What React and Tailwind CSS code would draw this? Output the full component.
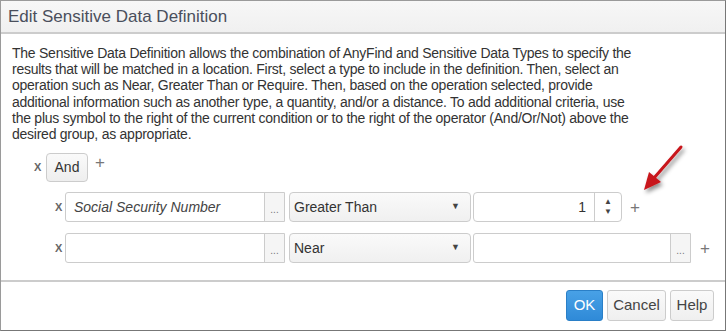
import React from "react";

const font = { fontFamily: '"Liberation Sans", Arial, sans-serif' };

const intro = [
  "The Sensitive Data Definition allows the combination of AnyFind and Sensitive Data Types to specify the",
  "results that will be matched in a location. First, select a type to include in the definition. Then, select an",
  "operation such as Near, Greater Than or Require. Then, based on the operation selected, provide",
  "additional information such as another type, a quantity, and/or a distance. To add additional criteria, use",
  "the plus symbol to the right of the current condition or to the right of the operator (And/Or/Not) above the",
  "desired group, as appropriate.",
];

function Remove({ className = "" }) {
  return (
    <span className={`text-[11px] font-bold text-[#666] w-[8px] ${className}`}>X</span>
  );
}

function Plus({ className = "" }) {
  return <span className={`text-[17px] text-[#777] leading-none ${className}`}>+</span>;
}

function Ellipsis() {
  return (
    <div className="w-[20px] h-full flex items-end justify-center pb-[6px] bg-[#f5f5f5] border-l border-[#ccc] text-[10px] text-[#777] leading-none">
      ...
    </div>
  );
}

function Select({ value }) {
  return (
    <div className="w-[182px] h-[30px] flex items-center justify-between pl-[4px] pr-[10px] rounded-[4px] border border-[#ccc] bg-gradient-to-b from-[#fafafa] to-[#f0f0f0] text-[14px] text-[#333]">
      <span>{value}</span>
      <span className="text-[9px] text-[#444]">▼</span>
    </div>
  );
}

export default function App() {
  return (
    <div className="w-[727px] h-[332px] bg-white" style={font}>
      <div className="relative w-[726px] h-[331px] border border-[#9a9a9a] border-r-[#777] border-b-[#777] flex flex-col">
        {/* header */}
        <div className="h-[33px] shrink-0 flex items-center pl-[7px] bg-gradient-to-b from-[#f7f7f7] to-[#f0f0f0] border-b-2 border-[#ccc]">
          <h2 className="text-[17px] text-[#4a4f5c]">Edit Sensitive Data Definition</h2>
        </div>

        {/* body */}
        <div className="flex-1 pl-[11px] pr-[10px] pt-[11px]">
          <div className="text-[14px] leading-[16.2px] text-[#333] tracking-[-0.25px]">
            {intro.map((line, i) => (
              <p key={i} className="whitespace-nowrap">{line}</p>
            ))}
          </div>

          <div className="mt-[11px] flex items-center gap-[4px] pl-[22px]">
            <Remove className="mr-[0px]" />
            <div className="h-[29px] w-[42px] flex items-center justify-center rounded-[4px] border border-[#ccc] bg-gradient-to-b from-[#fafafa] to-[#eee] text-[14px] text-[#333]">
              And
            </div>
            <Plus className="ml-[3px] -mt-[10px]" />
          </div>

          <div className="mt-[10px] flex items-center pl-[43px]">
            <Remove className="mr-[2px]" />
            <div className="h-[30px] w-[220px] flex border border-[#ccc] rounded-l-[3px]">
              <div className="flex-1 flex items-center pl-[8px] text-[14px] italic text-[#444]">
                Social Security Number
              </div>
              <Ellipsis />
            </div>
            <div className="ml-[4px]">
              <Select value="Greater Than" />
            </div>
            <div className="ml-[2px] h-[30px] w-[149px] flex rounded-[4px] border border-[#ccc]">
              <div className="flex-1 flex items-center justify-end pr-[8px] text-[14px] text-[#333]">1</div>
              <div className="w-[27px] border-l border-[#ccc] flex flex-col items-center justify-center gap-[2px] text-[8px] leading-none text-[#444]">
                <span>▲</span>
                <span>▼</span>
              </div>
            </div>
            <Plus className="ml-[8px]" />
          </div>

          <div className="mt-[11px] flex items-center pl-[43px]">
            <Remove className="mr-[2px]" />
            <div className="h-[30px] w-[220px] flex border border-[#ccc] rounded-l-[3px]">
              <div className="flex-1" />
              <Ellipsis />
            </div>
            <div className="ml-[4px]">
              <Select value="Near" />
            </div>
            <div className="ml-[2px] h-[30px] w-[218px] flex border border-[#ccc] rounded-l-[3px]">
              <div className="flex-1" />
              <Ellipsis />
            </div>
            <Plus className="ml-[9px]" />
          </div>
        </div>

        {/* footer */}
        <div className="h-[50px] shrink-0 border-t-2 border-[#ccc] flex items-center justify-end gap-[4px] pr-[11px] pb-[1px]">
          <button className="h-[31px] w-[37px] rounded-[3px] border border-[#2a7fc7] bg-gradient-to-b from-[#48a1e6] to-[#2f8ad8] text-[15px] text-white">
            OK
          </button>
          <button className="h-[31px] w-[59px] rounded-[3px] border border-[#ccc] bg-gradient-to-b from-[#fafafa] to-[#efefef] text-[15px] text-[#444]">
            Cancel
          </button>
          <button className="h-[31px] w-[44px] rounded-[3px] border border-[#ccc] bg-gradient-to-b from-[#fafafa] to-[#efefef] text-[15px] text-[#444]">
            Help
          </button>
        </div>

        {/* annotation arrow */}
        <svg className="absolute left-[636px] top-[140px]" width="56" height="56" viewBox="0 0 56 56">
          <defs>
            <filter id="sh" x="-50%" y="-50%" width="200%" height="200%">
              <feDropShadow dx="2" dy="3" stdDeviation="2" floodColor="#000" floodOpacity="0.45" />
            </filter>
          </defs>
          <g filter="url(#sh)">
            <line x1="44" y1="6" x2="17" y2="37" stroke="#c8141a" strokeWidth="3" strokeLinecap="round" />
            <polygon points="7,49 12,31 24,41" fill="#c8141a" />
          </g>
        </svg>
      </div>
    </div>
  );
}
